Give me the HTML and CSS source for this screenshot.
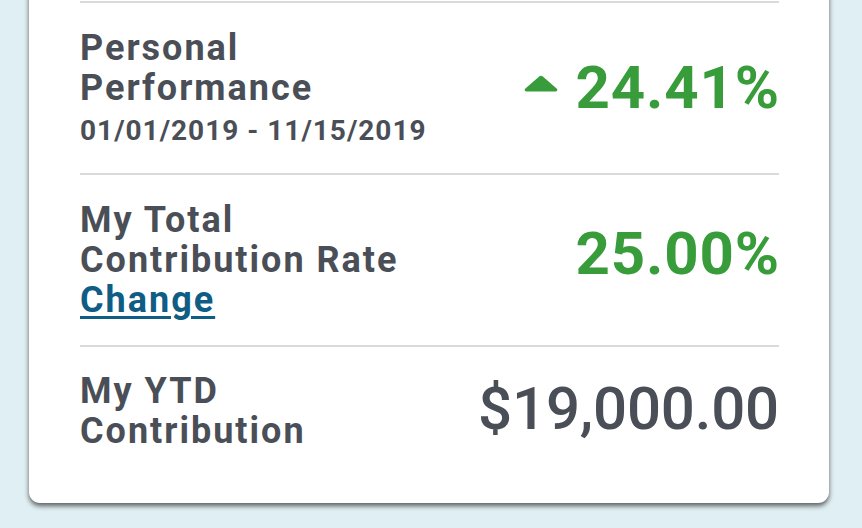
FILE: index.html
```html
<!DOCTYPE html>
<html lang="en">
<head>
<meta charset="utf-8">
<title>Contributions</title>
<link rel="stylesheet" href="styles.css">
</head>
<body>
<div class="card">
  <div class="row">
    <div class="label">
      <div class="title">Personal<br>Performance</div>
      <div class="date">01/01/2019 - 11/15/2019</div>
    </div>
    <div class="value green">
      <svg class="arrow" width="34" height="17" viewBox="0 0 34 17"><path d="M15.2 1.4 Q17 0 18.8 1.4 L32.6 13.4 Q34.6 15.6 31.6 16.6 L2.4 16.6 Q-0.6 15.6 1.4 13.4 Z" fill="#389c3b"/></svg>
      <span>24.41%</span>
    </div>
  </div>
  <div class="row">
    <div class="label">
      <div class="title">My Total<br>Contribution Rate</div>
      <a class="link" href="#">Change</a>
    </div>
    <div class="value green up-lg"><span>25.00%</span></div>
  </div>
  <div class="row last">
    <div class="label">
      <div class="title">My YTD<br>Contribution</div>
    </div>
    <div class="value gray up-sm"><span>$19,000.00</span></div>
  </div>
</div>
</body>
</html>
```
FILE: styles.css
```css
html, body {
  margin: 0;
  padding: 0;
}
body {
  background: #e0eff3;
  font-family: Roboto, "Liberation Sans", sans-serif;
  color: #4a4e57;
  width: 862px;
  height: 528px;
  overflow: hidden;
}
.card {
  margin: -20px 33px 0 29px;
  padding: 21px 50px 32px 51px;
  background: #ffffff;
  border-radius: 11px;
  box-shadow: 0 3px 5px rgba(0, 0, 0, 0.6);
}
.row {
  display: flex;
  justify-content: space-between;
  align-items: center;
  border-top: 2px solid #dadada;
  padding: 24px 0 24px;
  min-height: 122px;
}
.row.last {
  padding-bottom: 20px;
  min-height: 0;
}
.label {
  display: flex;
  flex-direction: column;
  align-items: flex-start;
}
.title {
  font-size: 36px;
  font-weight: 700;
  line-height: 40px;
  letter-spacing: 2px;
}
.date {
  font-size: 28px;
  font-weight: 700;
  line-height: 36px;
  letter-spacing: 1px;
  margin-top: 5px;
}
.link {
  font-size: 36px;
  font-weight: 700;
  line-height: 40px;
  letter-spacing: 2px;
  color: #0f5c85;
  text-decoration: underline;
  text-decoration-thickness: 3px;
  text-underline-offset: 4px;
}
.value {
  display: flex;
  align-items: center;
  font-size: 60px;
  line-height: 70px;
}
.value.green {
  color: #389c3b;
  font-weight: 700;
  letter-spacing: 0.8px;
  margin-right: -0.8px;
}
.value.gray {
  color: #4a4e57;
  font-weight: 500;
  letter-spacing: -0.2px;
}
.value.up-lg {
  margin-bottom: 12px;
}
.value.up-sm {
  margin-bottom: 5px;
}
.arrow {
  margin-right: 18px;
  margin-top: -10px;
}
```
